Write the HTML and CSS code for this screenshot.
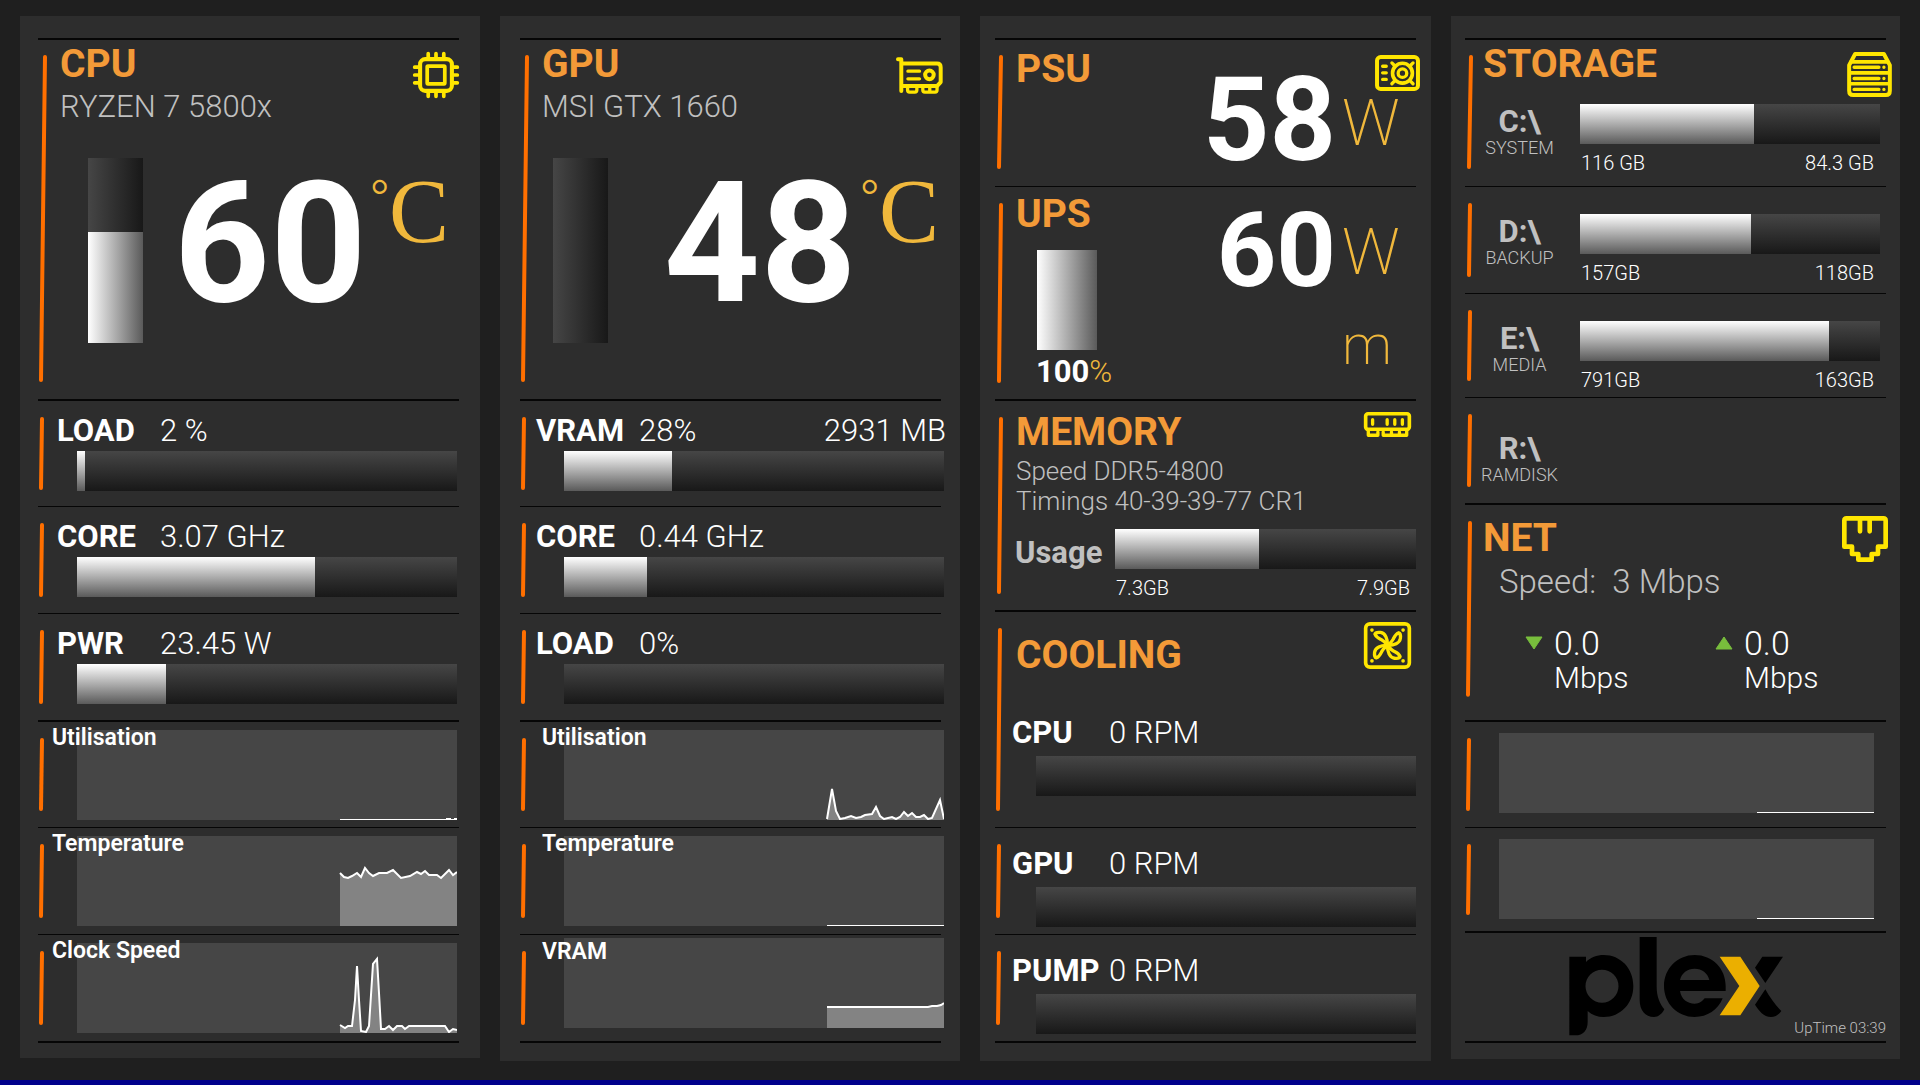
FILE: index.html
```html
<!DOCTYPE html>
<html lang="en">
<head>
<meta charset="utf-8">
<title>System Monitor</title>
<meta name="viewport" content="width=device-width, initial-scale=1">
<link rel="stylesheet" href="styles.css">
</head>
<body>
<main class="dashboard">

  <section class="panel panel--cpu" aria-label="CPU">
    <div class="block block--first">
      <svg class="accent" viewBox="0 0 8 100" preserveAspectRatio="none"><line x1="7" y1="0" x2="3" y2="100" vector-effect="non-scaling-stroke"/></svg>
      <div class="block-body">
        <header class="header header--top">
          <div>
            <h2 class="title">CPU</h2>
            <p class="model">RYZEN 7 5800x</p>
          </div>
          <svg class="icon" width="46" height="46" viewBox="0 0 136 136">
            <rect x="21" y="21" width="94" height="94" rx="15" stroke-width="12"/>
            <rect x="42" y="42" width="52" height="52" rx="2" stroke-width="11"/>
            <path stroke-width="11" d="M45 5V18M68 5V18M91 5V18M45 118V131M68 118V131M91 118V131M5 45H18M5 68H18M5 91H18M118 45H131M118 68H131M118 91H131"/>
          </svg>
        </header>
        <div class="gauge">
          <div class="column" role="meter" aria-label="CPU temperature" aria-valuenow="60"><div class="column-fill" style="height:60%"></div></div>
          <div class="reading reading--xl">60</div>
          <div class="degrees"><span class="degree-mark">°</span>C</div>
        </div>
      </div>
    </div>
    <div class="block">
      <svg class="accent" viewBox="0 0 8 100" preserveAspectRatio="none"><line x1="4" y1="0" x2="3" y2="100" vector-effect="non-scaling-stroke"/></svg>
      <div class="metric">
        <div class="metric-line"><h3 class="label">LOAD</h3><span class="value">2 %</span></div>
        <div class="bar" role="meter" aria-label="CPU load" aria-valuenow="2"><div class="bar-fill" style="width:2.1%"></div></div>
      </div>
    </div>
    <div class="block block--thin">
      <svg class="accent" viewBox="0 0 8 100" preserveAspectRatio="none"><line x1="4" y1="0" x2="3" y2="100" vector-effect="non-scaling-stroke"/></svg>
      <div class="metric">
        <div class="metric-line"><h3 class="label">CORE</h3><span class="value">3.07 GHz</span></div>
        <div class="bar" role="meter" aria-label="CPU core clock" aria-valuenow="63"><div class="bar-fill" style="width:62.6%"></div></div>
      </div>
    </div>
    <div class="block block--thin">
      <svg class="accent" viewBox="0 0 8 100" preserveAspectRatio="none"><line x1="4" y1="0" x2="3" y2="100" vector-effect="non-scaling-stroke"/></svg>
      <div class="metric">
        <div class="metric-line"><h3 class="label">PWR</h3><span class="value">23.45 W</span></div>
        <div class="bar" role="meter" aria-label="CPU power" aria-valuenow="23"><div class="bar-fill" style="width:23.4%"></div></div>
      </div>
    </div>
    <div class="block">
      <svg class="accent" viewBox="0 0 8 100" preserveAspectRatio="none"><line x1="4" y1="0" x2="3" y2="100" vector-effect="non-scaling-stroke"/></svg>
      <div class="history">
        <svg class="chart" viewBox="0 0 380 90" preserveAspectRatio="none"><path class="baseline" d="M263 89.5H380M369 88.5H374M377 88.5H380"/></svg>
        <h3 class="chart-label">Utilisation</h3>
      </div>
    </div>
    <div class="block block--thin">
      <svg class="accent" viewBox="0 0 8 100" preserveAspectRatio="none"><line x1="4" y1="0" x2="3" y2="100" vector-effect="non-scaling-stroke"/></svg>
      <div class="history">
        <svg class="chart" viewBox="0 0 380 90" preserveAspectRatio="none">
          <polygon class="area" points="263,90 263,37 267,41 271,42 275,40 280,37 284,41 288,32 292,37 296,40 302,37 310,37 316,34 324,42 333,40 340,36 344,38 348,35 352,39 360,39 364,42 372,34 376,39 380,36 380,90"/>
          <polyline class="trace" points="263,37 267,41 271,42 275,40 280,37 284,41 288,32 292,37 296,40 302,37 310,37 316,34 324,42 333,40 340,36 344,38 348,35 352,39 360,39 364,42 372,34 376,39 380,36"/>
        </svg>
        <h3 class="chart-label">Temperature</h3>
      </div>
    </div>
    <div class="block block--thin block--last">
      <svg class="accent" viewBox="0 0 8 100" preserveAspectRatio="none"><line x1="4" y1="0" x2="3" y2="100" vector-effect="non-scaling-stroke"/></svg>
      <div class="history">
        <svg class="chart" viewBox="0 0 380 90" preserveAspectRatio="none">
          <polygon class="area" points="263,90 263,82 268,85 271,83 275,83 278,57 280,23 282,57 284,88 289,89 292,83 296,21 300,16 302,50 304,86 308,86 312,83 316,87 320,83 325,83 328,86 332,83 368,83 372,89 376,86 380,87 380,90"/>
          <polyline class="trace" points="263,82 268,85 271,83 275,83 278,57 280,23 282,57 284,88 289,89 292,83 296,21 300,16 302,50 304,86 308,86 312,83 316,87 320,83 325,83 328,86 332,83 368,83 372,89 376,86 380,87"/>
        </svg>
        <h3 class="chart-label">Clock Speed</h3>
      </div>
    </div>
  </section>

  <section class="panel panel--gpu" aria-label="GPU">
    <div class="block block--first">
      <svg class="accent" viewBox="0 0 8 100" preserveAspectRatio="none"><line x1="7" y1="0" x2="3" y2="100" vector-effect="non-scaling-stroke"/></svg>
      <div class="block-body">
        <header class="header header--top">
          <div>
            <h2 class="title">GPU</h2>
            <p class="model">MSI GTX 1660</p>
          </div>
          <svg class="icon icon--card" width="47" height="47" viewBox="0 0 142 142">
            <g transform="translate(0 15)">
              <path stroke-width="12" d="M6 7H16V103M18 20H124Q135 20 135 32V76L124 88H18"/>
              <path stroke-width="10" d="M36 43H71M36 66H71M35 92V100Q35 106 41 106H57Q63 106 63 100V92M81 92V100Q81 106 87 106H118Q124 106 124 100V92M102 92V106"/>
              <circle cx="101" cy="54" r="13" stroke-width="12"/>
            </g>
          </svg>
        </header>
        <div class="gauge">
          <div class="column" role="meter" aria-label="GPU temperature" aria-valuenow="48"></div>
          <div class="reading reading--xl">48</div>
          <div class="degrees"><span class="degree-mark">°</span>C</div>
        </div>
      </div>
    </div>
    <div class="block">
      <svg class="accent" viewBox="0 0 8 100" preserveAspectRatio="none"><line x1="4" y1="0" x2="3" y2="100" vector-effect="non-scaling-stroke"/></svg>
      <div class="metric">
        <div class="metric-line"><h3 class="label">VRAM</h3><span class="value">28%</span><span class="value value--end">2931 MB</span></div>
        <div class="bar" role="meter" aria-label="VRAM in use" aria-valuenow="28"><div class="bar-fill" style="width:28.4%"></div></div>
      </div>
    </div>
    <div class="block block--thin">
      <svg class="accent" viewBox="0 0 8 100" preserveAspectRatio="none"><line x1="4" y1="0" x2="3" y2="100" vector-effect="non-scaling-stroke"/></svg>
      <div class="metric">
        <div class="metric-line"><h3 class="label">CORE</h3><span class="value">0.44 GHz</span></div>
        <div class="bar" role="meter" aria-label="GPU core clock" aria-valuenow="22"><div class="bar-fill" style="width:21.8%"></div></div>
      </div>
    </div>
    <div class="block block--thin">
      <svg class="accent" viewBox="0 0 8 100" preserveAspectRatio="none"><line x1="4" y1="0" x2="3" y2="100" vector-effect="non-scaling-stroke"/></svg>
      <div class="metric">
        <div class="metric-line"><h3 class="label">LOAD</h3><span class="value">0%</span></div>
        <div class="bar" role="meter" aria-label="GPU load" aria-valuenow="0"></div>
      </div>
    </div>
    <div class="block">
      <svg class="accent" viewBox="0 0 8 100" preserveAspectRatio="none"><line x1="4" y1="0" x2="3" y2="100" vector-effect="non-scaling-stroke"/></svg>
      <div class="history">
        <svg class="chart" viewBox="0 0 380 90" preserveAspectRatio="none">
          <polygon class="area" points="263,90 263,89 268,59 272,81 276,89 281,88 287,86 292,88 297,87 301,85 308,84 312,77 316,86 320,89 328,87 332,89 336,87 340,82 344,86 348,83 352,87 356,87 360,85 364,89 368,88 376,70 380,89 380,90"/>
          <polyline class="trace" points="263,89 268,59 272,81 276,89 281,88 287,86 292,88 297,87 301,85 308,84 312,77 316,86 320,89 328,87 332,89 336,87 340,82 344,86 348,83 352,87 356,87 360,85 364,89 368,88 376,70 380,89"/>
        </svg>
        <h3 class="chart-label">Utilisation</h3>
      </div>
    </div>
    <div class="block block--thin">
      <svg class="accent" viewBox="0 0 8 100" preserveAspectRatio="none"><line x1="4" y1="0" x2="3" y2="100" vector-effect="non-scaling-stroke"/></svg>
      <div class="history">
        <svg class="chart" viewBox="0 0 380 90" preserveAspectRatio="none"><path class="baseline" d="M263 89.5H380"/></svg>
        <h3 class="chart-label">Temperature</h3>
      </div>
    </div>
    <div class="block block--thin block--last">
      <svg class="accent" viewBox="0 0 8 100" preserveAspectRatio="none"><line x1="4" y1="0" x2="3" y2="100" vector-effect="non-scaling-stroke"/></svg>
      <div class="history history--vram">
        <svg class="chart" viewBox="0 0 380 90" preserveAspectRatio="none">
          <polygon class="area" points="263,90 263,69 364,69 368,68 373,68 377,67 380,65 380,90"/>
          <polyline class="trace" points="263,69 364,69 368,68 373,68 377,67 380,65"/>
        </svg>
        <h3 class="chart-label">VRAM</h3>
      </div>
    </div>
  </section>

  <section class="panel panel--power" aria-label="Power, memory and cooling">
    <div class="block block--first">
      <svg class="accent" viewBox="0 0 8 100" preserveAspectRatio="none"><line x1="6" y1="0" x2="4" y2="100" vector-effect="non-scaling-stroke"/></svg>
      <div class="supply">
        <h2 class="title">PSU</h2>
        <div class="reading reading--lg">58</div>
        <div class="supply-side">
          <svg class="icon" width="45" height="36" viewBox="0 0 136 109">
            <rect x="6" y="6" width="124" height="97" rx="11" stroke-width="12"/>
            <path stroke-width="10" d="M23 34H34M23 54H34M23 74H34M51 24L61 34M115 24L105 34M51 87L61 77M115 87L105 77"/>
            <circle cx="83" cy="55" r="30" stroke-width="11"/>
            <circle cx="83" cy="55" r="13" stroke-width="10"/>
          </svg>
          <span class="unit">W</span>
        </div>
      </div>
    </div>
    <div class="block block--thin">
      <svg class="accent" viewBox="0 0 8 100" preserveAspectRatio="none"><line x1="6" y1="0" x2="4" y2="100" vector-effect="non-scaling-stroke"/></svg>
      <div class="supply supply--ups">
        <div>
          <h2 class="title">UPS</h2>
          <div class="column column--ups" role="meter" aria-label="UPS charge" aria-valuenow="100"><div class="column-fill" style="height:100%"></div></div>
          <p class="charge">100<span class="charge-unit">%</span></p>
        </div>
        <div class="reading reading--md">60</div>
        <div class="supply-side">
          <span class="unit">W</span>
          <span class="unit unit--minutes">m</span>
        </div>
      </div>
    </div>
    <div class="block">
      <svg class="accent" viewBox="0 0 8 100" preserveAspectRatio="none"><line x1="6" y1="0" x2="4" y2="100" vector-effect="non-scaling-stroke"/></svg>
      <div class="block-body block-body--memory">
        <header class="header">
          <h2 class="title">MEMORY</h2>
          <svg class="icon icon--memory" width="47" height="25" viewBox="0 0 142 75">
            <rect x="5" y="5" width="132" height="47" rx="7" stroke-width="11"/>
            <path stroke-width="10" d="M26 23V37M70 23V37M93 23V37M116 23V37M13 54V70H42V60M58 60V70H129V54M83 60V70M107 60V70"/>
          </svg>
        </header>
        <p class="spec">Speed DDR5-4800<br>Timings 40-39-39-77 CR1</p>
        <div class="capacity">
          <h3 class="label label--muted">Usage</h3>
          <div>
            <div class="bar" role="meter" aria-label="Memory usage" aria-valuenow="48"><div class="bar-fill" style="width:48%"></div></div>
            <div class="scale"><span>7.3GB</span><span>7.9GB</span></div>
          </div>
        </div>
      </div>
    </div>
    <div class="block">
      <svg class="accent" viewBox="0 0 8 100" preserveAspectRatio="none"><line x1="5" y1="0" x2="3" y2="100" vector-effect="non-scaling-stroke"/></svg>
      <div class="block-body block-body--cooling">
        <header class="header header--cooling">
          <h2 class="title">COOLING</h2>
          <svg class="icon icon--fan" width="47" height="47" viewBox="0 0 142 141">
            <defs><path id="blade" d="M71 70C72 50 64 33 50 31C42 30 34 32 33 36C36 46 45 49 53 53C61 57 66 64 71 70Z"/></defs>
            <rect x="5" y="5" width="132" height="131" rx="13" stroke-width="11"/>
            <path stroke-width="11" d="M24 24h.1M118 24h.1M24 117h.1M118 117h.1"/>
            <g stroke-width="10">
              <use href="#blade"/><use href="#blade" transform="rotate(90 71 70)"/><use href="#blade" transform="rotate(180 71 70)"/><use href="#blade" transform="rotate(270 71 70)"/>
            </g>
          </svg>
        </header>
        <div class="metric metric--fan">
          <div class="metric-line"><h3 class="label">CPU</h3><span class="value">0 RPM</span></div>
          <div class="bar" role="meter" aria-label="CPU fan" aria-valuenow="0"></div>
        </div>
      </div>
    </div>
    <div class="block block--thin">
      <svg class="accent" viewBox="0 0 8 100" preserveAspectRatio="none"><line x1="4" y1="0" x2="3" y2="100" vector-effect="non-scaling-stroke"/></svg>
      <div class="metric metric--fan">
        <div class="metric-line"><h3 class="label">GPU</h3><span class="value">0 RPM</span></div>
        <div class="bar" role="meter" aria-label="GPU fan" aria-valuenow="0"></div>
      </div>
    </div>
    <div class="block block--thin block--last">
      <svg class="accent" viewBox="0 0 8 100" preserveAspectRatio="none"><line x1="4" y1="0" x2="3" y2="100" vector-effect="non-scaling-stroke"/></svg>
      <div class="metric metric--fan">
        <div class="metric-line"><h3 class="label">PUMP</h3><span class="value">0 RPM</span></div>
        <div class="bar" role="meter" aria-label="Pump" aria-valuenow="0"></div>
      </div>
    </div>
  </section>

  <section class="panel panel--storage" aria-label="Storage and network">
    <div class="block block--first">
      <svg class="accent" viewBox="0 0 8 100" preserveAspectRatio="none"><line x1="6" y1="0" x2="4" y2="100" vector-effect="non-scaling-stroke"/></svg>
      <div class="block-body">
        <header class="header header--top header--storage">
          <h2 class="title">STORAGE</h2>
          <svg class="icon icon--drives" width="45" height="45" viewBox="0 0 135 136">
            <path stroke-width="12" d="M6 40L24 6H111L129 40V117Q129 130 117 130H18Q6 130 6 117Z"/>
            <path stroke-width="11" d="M12 30H123M8 63H127M8 96H127"/>
            <path stroke-width="10" d="M21 46H96M21 80H96M21 113H96M111 46h.1M111 80h.1M111 113h.1"/>
          </svg>
        </header>
        <div class="capacity">
          <div class="drive"><h3 class="label label--muted">C:\</h3><p class="drive-name">SYSTEM</p></div>
          <div>
            <div class="bar" role="meter" aria-label="Drive C" aria-valuenow="58"><div class="bar-fill" style="width:58%"></div></div>
            <div class="scale"><span>116 GB</span><span>84.3 GB</span></div>
          </div>
        </div>
      </div>
    </div>
    <div class="block block--thin">
      <svg class="accent" viewBox="0 0 8 100" preserveAspectRatio="none"><line x1="5" y1="0" x2="4" y2="100" vector-effect="non-scaling-stroke"/></svg>
      <div class="capacity capacity--row">
        <div class="drive"><h3 class="label label--muted">D:\</h3><p class="drive-name">BACKUP</p></div>
        <div>
          <div class="bar" role="meter" aria-label="Drive D" aria-valuenow="57"><div class="bar-fill" style="width:57%"></div></div>
          <div class="scale"><span>157GB</span><span>118GB</span></div>
        </div>
      </div>
    </div>
    <div class="block block--thin">
      <svg class="accent" viewBox="0 0 8 100" preserveAspectRatio="none"><line x1="5" y1="0" x2="4" y2="100" vector-effect="non-scaling-stroke"/></svg>
      <div class="capacity capacity--row">
        <div class="drive"><h3 class="label label--muted">E:\</h3><p class="drive-name">MEDIA</p></div>
        <div>
          <div class="bar" role="meter" aria-label="Drive E" aria-valuenow="83"><div class="bar-fill" style="width:83%"></div></div>
          <div class="scale"><span>791GB</span><span>163GB</span></div>
        </div>
      </div>
    </div>
    <div class="block block--thin">
      <svg class="accent" viewBox="0 0 8 100" preserveAspectRatio="none"><line x1="5" y1="0" x2="4" y2="100" vector-effect="non-scaling-stroke"/></svg>
      <div class="capacity capacity--empty">
        <div class="drive"><h3 class="label label--muted">R:\</h3><p class="drive-name">RAMDISK</p></div>
      </div>
    </div>
    <div class="block">
      <svg class="accent" viewBox="0 0 8 100" preserveAspectRatio="none"><line x1="5" y1="0" x2="3" y2="96" vector-effect="non-scaling-stroke"/></svg>
      <div class="block-body block-body--net">
        <header class="header">
          <h2 class="title">NET</h2>
          <svg class="icon icon--port" width="46" height="46" viewBox="0 0 138 138">
            <path stroke-width="14" d="M7 14Q7 7 14 7H124Q131 7 131 14V92H108V114H89V131H49V114H30V92H7ZM54 7V46M83 7V46"/>
          </svg>
        </header>
        <p class="link-speed">Speed:&nbsp; 3 Mbps</p>
        <div class="rates">
          <div class="rate">
            <svg class="arrow" width="18" height="14" viewBox="0 0 18 14" role="img" aria-label="Download"><path d="M1 1H17L9 13Z"/></svg>
            <p class="rate-text"><span class="rate-value">0.0</span><span class="rate-unit">Mbps</span></p>
          </div>
          <div class="rate">
            <svg class="arrow" width="18" height="14" viewBox="0 0 18 14" role="img" aria-label="Upload"><path d="M1 13H17L9 1Z"/></svg>
            <p class="rate-text"><span class="rate-value">0.0</span><span class="rate-unit">Mbps</span></p>
          </div>
        </div>
      </div>
    </div>
    <div class="block">
      <svg class="accent" viewBox="0 0 8 100" preserveAspectRatio="none"><line x1="4" y1="0" x2="3" y2="100" vector-effect="non-scaling-stroke"/></svg>
      <div class="history history--net">
        <svg class="chart" viewBox="0 0 375 80" preserveAspectRatio="none"><path class="baseline" d="M258 79.5H375"/></svg>
      </div>
    </div>
    <div class="block block--thin">
      <svg class="accent" viewBox="0 0 8 100" preserveAspectRatio="none"><line x1="4" y1="0" x2="3" y2="100" vector-effect="non-scaling-stroke"/></svg>
      <div class="history history--net">
        <svg class="chart" viewBox="0 0 375 80" preserveAspectRatio="none"><path class="baseline" d="M258 79.5H375"/></svg>
      </div>
    </div>
    <div class="block block--last block--brand">
      <svg class="logo" width="214" height="99" viewBox="375 711 642 297" role="img" aria-label="plex">
        <path fill-rule="evenodd" d="M376 770H426V786C440 772 458 765 479 765C530 765 568 805 568 858C568 911 530 951 479 951C461 951 444 945 431 933V965C431 990 418 1006 394 1006H376ZM474 809A49 49 0 1 0 474 908A49 49 0 1 0 474 809Z"/>
        <path d="M587 711H638V860C638 890 648 912 661 928C654 942 643 951 630 951C603 951 587 930 587 900Z"/>
        <path fill-rule="evenodd" d="M845 873H708C712 898 730 911 752 911C766 911 775 904 782 895H836C822 930 790 951 752 951C700 951 660 910 660 858C660 806 700 765 752 765C806 765 845 806 845 858ZM708 840H796C791 819 774 806 752 806C730 806 713 819 708 840Z"/>
        <path class="logo-chevron" d="M827 770H889L947 858L889 946H827L886 858Z"/>
        <path d="M955 770H1017L964 849L933 803ZM964 868C978 893 995 917 1012 933C1004 945 993 951 981 951C959 951 945 932 933 914Z"/>
      </svg>
      <p class="uptime">UpTime 03:39</p>
    </div>
  </section>
</main>
<div class="taskbar-edge"></div>
</body>
</html>
```
FILE: styles.css
```css
:root {
  --page: #1f1f1f;
  --panel: #2d2d2d;
  --rule: #060606;
  --orange: #f39a38;
  --accent: #ff6f00;
  --amber: #f0b83c;
  --yellow: #ffe600;
  --muted: #c0c0c0;
}

* {
  box-sizing: border-box;
}

body {
  margin: 0;
  min-height: 100vh;
  display: flex;
  flex-direction: column;
  background: var(--page);
  color: #fff;
  font-family: Roboto, "Liberation Sans", sans-serif;
  font-weight: 300;
}

h2, h3, p {
  margin: 0;
}

svg {
  display: block;
}

/* Panels */

.dashboard {
  flex: 1;
  display: grid;
  grid-template-columns: 460fr 460fr 451fr 449fr;
  column-gap: 20px;
  align-items: start;
  padding: 16px 20px;
}

.panel {
  display: grid;
  padding-top: 22px;
  background: var(--panel);
}

.panel--cpu {
  --title-x: 14px;
  --label-x: 11px;
  --value-x: 103px;
  --bar-x: 31px;
  --bar-end: 2px;
  --chart-label-x: 6px;
  --gauge-x: 42px;
  --gauge-end: 10px;
  grid-template-rows: minmax(361px, auto) repeat(5, minmax(107px, auto)) minmax(109px, auto);
  padding-left: 18px;
  padding-right: 21px;
  padding-bottom: 15px;
}

.panel--gpu {
  --title-x: 14px;
  --label-x: 8px;
  --value-x: 103px;
  --bar-x: 36px;
  --bar-end: -3px;
  --chart-label-x: 14px;
  --gauge-x: 25px;
  --gauge-end: 2px;
  grid-template-rows: minmax(361px, auto) repeat(5, minmax(107px, auto)) minmax(109px, auto);
  padding-left: 20px;
  padding-right: 19px;
  padding-bottom: 18px;
}

.panel--power {
  --title-x: 13px;
  --label-x: 9px;
  --value-x: 97px;
  --bar-x: 33px;
  --bar-end: 0px;
  grid-template-rows: minmax(148px, auto) minmax(213px, auto) minmax(211px, auto) minmax(217px, auto) minmax(107px, auto) minmax(109px, auto);
  padding-left: 15px;
  padding-right: 15px;
  padding-bottom: 18px;
}

.panel--storage {
  --title-x: 10px;
  grid-template-rows: minmax(148px, auto) minmax(107px, auto) minmax(104px, auto) minmax(106px, auto) minmax(217px, auto) minmax(107px, auto) minmax(104px, auto) minmax(112px, auto);
  padding-left: 14px;
  padding-right: 14px;
  padding-bottom: 16px;
}

.block {
  display: grid;
  grid-template-columns: 8px minmax(0, 1fr);
  border-top: 2px solid var(--rule);
}

.block--thin {
  border-top-width: 1px;
}

.block--last {
  border-bottom: 2px solid var(--rule);
}

.accent {
  width: 8px;
  height: 0;
  min-height: calc(100% - 36px);
  margin-top: 18px;
  overflow: visible;
  stroke: var(--accent);
  stroke-width: 4px;
  stroke-linecap: round;
}

.block--first .accent {
  margin-top: 17px;
}

/* Headers */

.header {
  display: flex;
  justify-content: space-between;
  align-items: flex-start;
}

.header--top {
  padding-top: 4px;
}

.header--top .icon {
  margin-top: 8px;
}

.title {
  padding-left: var(--title-x);
  color: var(--orange);
  font-size: 39px;
  line-height: 40px;
  font-weight: 700;
}

.model {
  padding-left: var(--title-x);
  color: var(--muted);
  font-size: 31px;
  line-height: 46px;
}

.icon {
  flex: none;
  overflow: visible;
  fill: none;
  stroke: var(--yellow);
  stroke-linecap: round;
  stroke-linejoin: round;
}

.icon--card {
  margin-right: -2px;
}

.icon--memory,
.icon--fan {
  margin-right: 5px;
}

.icon--port {
  margin-right: -2px;
}

.icon--drives {
  margin-right: -6px;
}

/* Large readings */

.gauge {
  display: flex;
  align-items: flex-start;
  margin-top: 28px;
  padding-left: var(--gauge-x);
  padding-right: var(--gauge-end);
}

.column {
  display: flex;
  align-items: flex-end;
  width: 55px;
  height: 185px;
  background: linear-gradient(90deg, #464646, #181818);
}

.column-fill {
  width: 100%;
  background: linear-gradient(90deg, #fff, #5a5a5a);
}

.reading {
  font-weight: 700;
}

.reading--xl {
  margin-left: auto;
  font-size: 168px;
  line-height: 172px;
}

.reading--lg {
  padding-top: 20px;
  font-size: 116px;
  line-height: 120px;
}

.reading--md {
  padding-top: 11px;
  font-size: 104px;
  line-height: 106px;
}

.degrees {
  display: flex;
  align-items: flex-start;
  margin-left: 4px;
  color: var(--amber);
  font-family: "Liberation Serif", serif;
  font-weight: 400;
  font-size: 90px;
  line-height: 108px;
}

.degree-mark {
  font-size: 46px;
  line-height: 76px;
}

.supply {
  display: grid;
  grid-template-columns: 1fr auto 84px;
  margin-right: -4px;
}

.supply .title {
  padding-top: 9px;
}

.supply-side {
  display: flex;
  flex-direction: column;
  padding-top: 15px;
}

.supply-side .icon {
  align-self: flex-end;
}

.unit {
  padding-left: 6px;
  color: var(--amber);
  font-size: 64px;
  line-height: 66px;
  font-weight: 200;
}

.supply--ups .title {
  padding-top: 7px;
}

.supply--ups .supply-side {
  padding-top: 33px;
}

.unit--minutes {
  margin-top: 26px;
  font-size: 56px;
}

.column--ups {
  width: 60px;
  height: 100px;
  margin: 16px 0 0 34px;
}

.charge {
  padding-left: 33px;
  font-size: 31px;
  line-height: 44px;
  font-weight: 700;
}

.charge-unit {
  color: var(--amber);
  font-weight: 300;
}

/* Metrics */

.metric {
  padding-top: 10px;
}

.metric-line {
  display: flex;
  padding-left: var(--label-x);
  font-size: 31px;
  line-height: 40px;
}

.label {
  font-size: 31px;
  font-weight: 700;
}

.metric-line .label {
  flex: none;
  width: var(--value-x);
}

.value--end {
  margin-left: auto;
  margin-right: -5px;
}

.bar {
  height: 40px;
  background: linear-gradient(#464646, #181818);
}

.bar-fill {
  height: 100%;
  background: linear-gradient(#fff, #5a5a5a);
}

.metric .bar {
  margin-left: var(--bar-x);
  margin-right: var(--bar-end);
}

.metric--fan {
  padding-top: 16px;
}

.metric--fan .bar {
  margin-top: 3px;
}

.block-body--cooling {
  padding-top: 10px;
}

.header--cooling .title {
  padding-top: 13px;
}

.header--cooling + .metric {
  padding-top: 38px;
}

/* Memory and drives */

.block-body--memory {
  padding-top: 11px;
}

.spec {
  margin-top: 4px;
  padding-left: 13px;
  color: var(--muted);
  font-size: 26px;
  line-height: 30px;
}

.capacity {
  display: grid;
  grid-template-columns: 107px minmax(0, 1fr);
}

.block-body--memory .capacity {
  grid-template-columns: 112px minmax(0, 1fr);
  margin-top: 13px;
}

.block-body--memory .label {
  padding-left: 12px;
  line-height: 48px;
}

.label--muted {
  color: var(--muted);
}

.scale {
  display: flex;
  justify-content: space-between;
  margin-top: 6px;
  padding: 0 6px 0 1px;
  font-size: 20px;
  line-height: 26px;
}

.panel--storage .capacity {
  padding-right: 6px;
}

.header--storage {
  height: 64px;
}

.capacity--row {
  padding-top: 27px;
}

.capacity--empty {
  padding-top: 33px;
}

.drive {
  width: 93px;
  padding-top: 2px;
  text-align: center;
}

.drive .label {
  line-height: 32px;
}

.drive-name {
  color: var(--muted);
  font-size: 18px;
  line-height: 20px;
}

/* Network */

.block-body--net {
  padding-top: 11px;
}

.block-body--net .title {
  line-height: 44px;
}

.link-speed {
  padding-left: 26px;
  color: var(--muted);
  font-size: 33px;
  line-height: 40px;
}

.rates {
  display: grid;
  grid-template-columns: 190px 1fr;
  margin-top: 22px;
  padding-left: 52px;
}

.rate {
  display: flex;
  align-items: flex-start;
  column-gap: 11px;
}

.arrow {
  margin-top: 12px;
  fill: #78be3c;
  stroke: #78be3c;
  stroke-linejoin: round;
}

.rate-text {
  display: grid;
}

.rate-value {
  font-size: 34px;
  line-height: 38px;
}

.rate-unit {
  font-size: 30px;
  line-height: 32px;
}

/* History charts */

.history {
  display: grid;
  align-content: start;
  padding-top: 8px;
}

.chart,
.chart-label {
  grid-area: 1 / 1;
}

.chart {
  width: calc(100% - var(--bar-x) - var(--bar-end));
  height: 90px;
  margin-left: var(--bar-x);
  background: #464646;
}

.history--vram {
  padding-top: 3px;
}

.history--vram .chart-label {
  padding-top: 6px;
}

.history--net {
  --bar-x: 26px;
  --bar-end: 12px;
  padding-top: 11px;
}

.history--net .chart {
  height: 80px;
}

.chart-label {
  padding-left: var(--chart-label-x);
  font-size: 23px;
  line-height: 16px;
  font-weight: 600;
}

.area {
  fill: #838383;
}

.trace {
  fill: none;
  stroke: #fff;
  stroke-width: 2px;
}

.baseline {
  fill: none;
  stroke: #fff;
  stroke-width: 1px;
}

/* Brand and uptime */

.block--brand {
  grid-template-columns: 1fr auto 1fr;
}

.logo {
  grid-column: 2;
  margin-top: 4px;
  fill: #000;
}

.logo-chevron {
  fill: #ebaf00;
}

.uptime {
  grid-column: 3;
  align-self: end;
  text-align: right;
  color: var(--muted);
  font-size: 15px;
  line-height: 26px;
}

.taskbar-edge {
  height: 5px;
  background: #00008b;
}
```
